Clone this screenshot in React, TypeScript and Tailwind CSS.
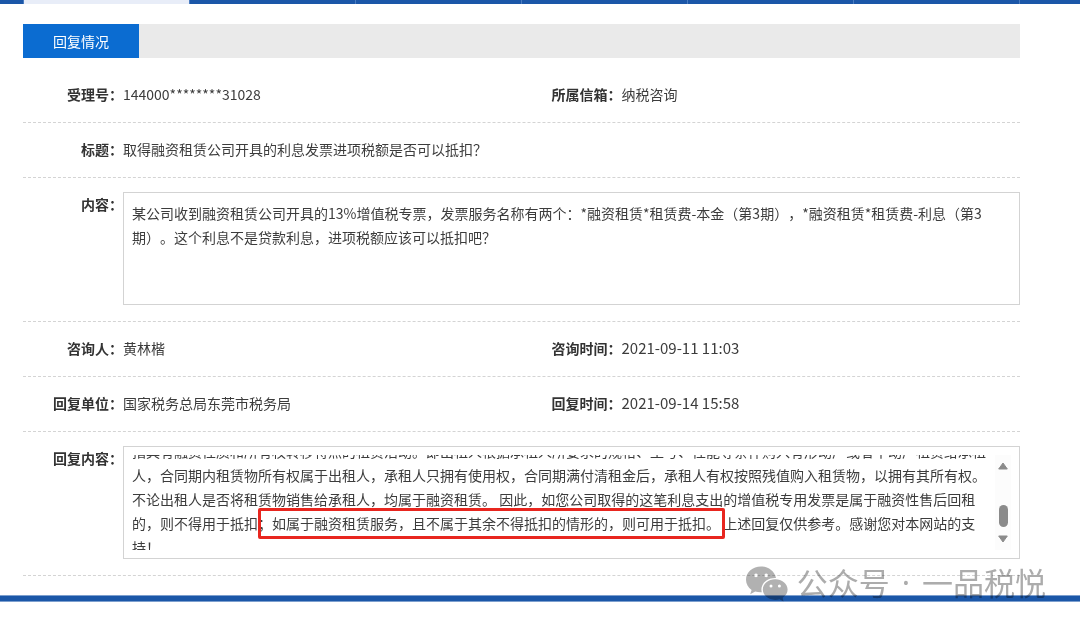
import { useEffect, useRef } from "react";
import type { ReactNode } from "react";

const QUESTION = [
  "某公司收到融资租赁公司开具的13%增值税专票，发票服务名称有两个：*融资租赁*租赁费-本金（第3期），*融资租赁*租赁费-利息（第3",
  "期）。这个利息不是贷款利息，进项税额应该可以抵扣吧？",
].join("\n");

const REPLY = [
  "指具有融资性质和所有权转移特点的租赁活动。即出租人根据承租人所要求的规格、型号、性能等条件购入有形动产或者不动产租赁给承租",
  "人，合同期内租赁物所有权属于出租人，承租人只拥有使用权，合同期满付清租金后，承租人有权按照残值购入租赁物，以拥有其所有权。",
  "不论出租人是否将租赁物销售给承租人，均属于融资租赁。 因此，如您公司取得的这笔利息支出的增值税专用发票是属于融资性售后回租",
  "的，则不得用于抵扣；如属于融资租赁服务，且不属于其余不得抵扣的情形的，则可用于抵扣。 上述回复仅供参考。感谢您对本网站的支",
  "持！",
].join("\n");

function Row({ children }: { children: ReactNode }) {
  return <div className="flex border-b border-dashed border-[#d4d4d4] pt-[14px] pb-4">{children}</div>;
}

function Label({ htmlFor, children }: { htmlFor?: string; children: ReactNode }) {
  const cls = "w-[100px] shrink-0 text-right font-bold text-[#333]";
  return htmlFor ? <label htmlFor={htmlFor} className={cls}>{children}</label> : <span className={cls}>{children}</span>;
}

function Field({ label, children }: { label: string; children: ReactNode }) {
  return (
    <div className="flex flex-1">
      <Label>{label}</Label>
      {children}
    </div>
  );
}

function NavStrip() {
  return (
    <nav className="flex h-1 overflow-hidden bg-[#1b57a8]">
      <div className="w-6 shrink-0 border-r border-[#4a7cc0]" />
      <div className="w-[166px] shrink-0 border-r border-[#4a7cc0] bg-[#e8edf8]" />
      {[0, 1, 2, 3, 4].map(i => <div key={i} className="w-[166px] shrink-0 border-r border-[#4a7cc0]" />)}
    </nav>
  );
}

function ScrollBar() {
  return (
    <div className="flex w-4 shrink-0 flex-col items-center bg-[#fcfcfc] py-[7px]" aria-hidden="true">
      <svg width="10" height="8" viewBox="0 0 10 8"><path d="M5 1 9.3 7H.7Z" fill="#8b8b8b" stroke="#8b8b8b" strokeLinejoin="round" /></svg>
      <div className="mt-auto mb-2 h-[22px] w-[9px] rounded-full bg-[#8b8b8b]" />
      <svg width="10" height="8" viewBox="0 0 10 8"><path d="M5 7 .7 1h8.6Z" fill="#8b8b8b" stroke="#8b8b8b" strokeLinejoin="round" /></svg>
    </div>
  );
}

function WechatMark() {
  return (
    <svg width="44" height="36" viewBox="0 0 44 36" fill="#b1b1b1" aria-hidden="true">
      <path fillRule="evenodd" d="M16 .5C7.700.5 1 6.400 1 13.800c0 4.200 2.200 7.800 5.600 10.200L5.200 28.300l5-2.700c2 .6 4.200.8 6.600.7A10.600 10.600 0 0 1 16.400 23.500C16.400 17 22.500 11.900 30 11.900h1C29.600 5.300 23.400.5 16 .5ZM11 7.600a1.800 1.800 0 1 1 0 3.600 1.800 1.800 0 0 1 0-3.600Zm10.200 0a1.800 1.800 0 1 1 0 3.600 1.800 1.800 0 0 1 0-3.600Z" />
      <path fillRule="evenodd" d="M30.200 13.300C23.400 13.300 17.800 17.900 17.800 23.600s5.600 10.300 12.400 10.300c1.500 0 3-.2 4.300-.6l4 2.200-.8-3.700c3-1.900 4.900-4.900 4.900-8.200 0-5.700-5.700-10.300-12.400-10.300ZM26 18.500a1.500 1.500 0 1 1 0 3 1.500 1.500 0 0 1 0-3Zm8.400 0a1.500 1.500 0 1 1 0 3 1.500 1.500 0 0 1 0-3Z" />
    </svg>
  );
}

export default function App() {
  const replyRef = useRef<HTMLTextAreaElement>(null);

  useEffect(() => {
    if (replyRef.current) replyRef.current.scrollTop = 16;
  }, []);

  return (
    <div className="relative bg-white font-['Noto_Sans_CJK_SC',sans-serif] text-sm leading-6 text-[#3c3c3c] [text-spacing-trim:space-all]">
      <NavStrip />

      <main className="mr-[60px] ml-[23px] pt-5 pb-[19px]">
        <div className="flex bg-[#eaeaea]">
          <h2 className="h-[34px] w-[116px] bg-[#0b6cd1] text-center leading-[34px] text-white">回复情况</h2>
        </div>

        <div className="pt-[10px]">
          <Row>
            <Field label="受理号："><span>144000********31028</span></Field>
            <Field label="所属信箱："><span>纳税咨询</span></Field>
          </Row>
          <Row>
            <Field label="标题："><span>取得融资租赁公司开具的利息发票进项税额是否可以抵扣？</span></Field>
          </Row>
          <Row>
            <Label htmlFor="question">内容：</Label>
            <div className="h-[113px] min-w-0 flex-1 border border-[#d3d3d3] p-2">
              <textarea id="question" readOnly value={QUESTION} className="block h-full w-full resize-none overflow-hidden whitespace-pre outline-none" />
            </div>
          </Row>
          <Row>
            <Field label="咨询人："><span>黄林楷</span></Field>
            <Field label="咨询时间："><time className="text-[15px]">2021-09-11 11:03</time></Field>
          </Row>
          <Row>
            <Field label="回复单位："><span>国家税务总局东莞市税务局</span></Field>
            <Field label="回复时间："><time className="text-[15px]">2021-09-14 15:58</time></Field>
          </Row>
          <Row>
            <Label htmlFor="reply">回复内容：</Label>
            <div className="relative flex h-[113px] min-w-0 flex-1 border border-[#d3d3d3] p-2">
              <textarea id="reply" ref={replyRef} readOnly value={REPLY} className="block h-full min-w-0 flex-1 resize-none overflow-hidden whitespace-pre outline-none" />
              <ScrollBar />
              {/* highlighted sentence */}
              <div className="pointer-events-none absolute top-[61px] left-[134px] h-[31px] w-[467px] rounded-xs border-3 border-[#e8261f]" />
            </div>
          </Row>
        </div>
      </main>

      <footer className="h-[7px] border-y border-[#7d9fce] bg-[#1b57a8]" />

      <div className="pointer-events-none absolute right-[34px] bottom-0 flex items-start gap-2 mix-blend-multiply">
        <WechatMark />
        <span className="flex items-center gap-3 text-[31px] leading-8 text-[#acacac]">
          <span>公众号</span>
          <span className="font-['Noto_Sans',sans-serif]">·</span>
          <span>一品税悦</span>
        </span>
      </div>
    </div>
  );
}
